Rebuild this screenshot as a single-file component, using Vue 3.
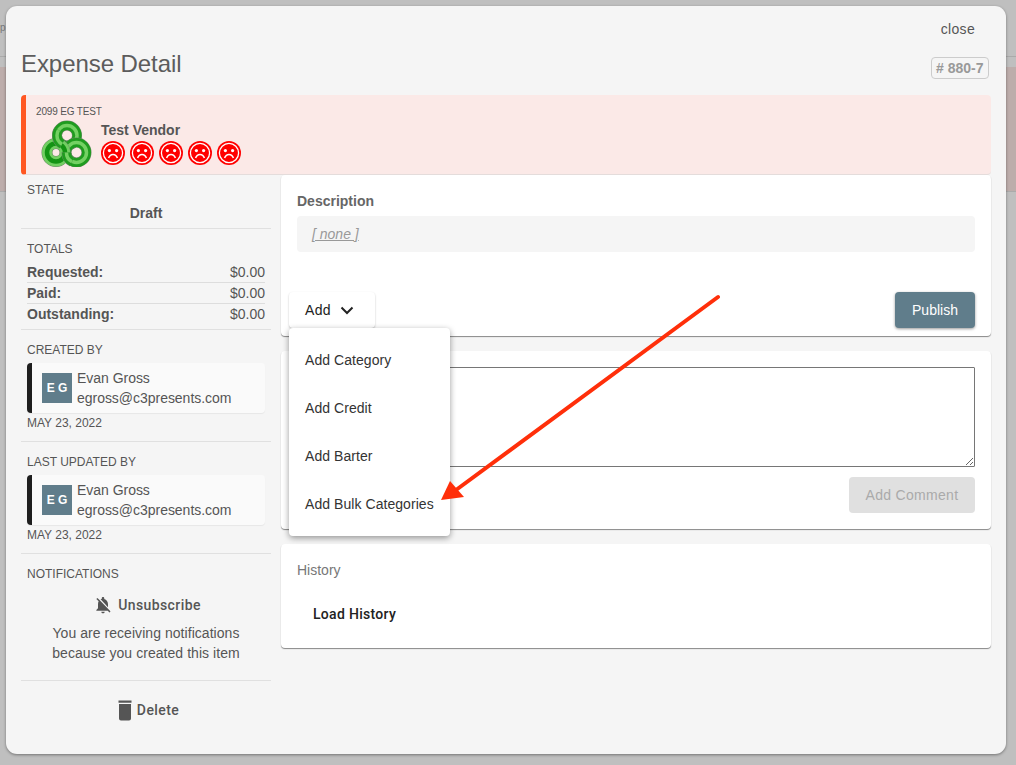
<script setup>
const totals = [
  { label: 'Requested:', value: '$0.00' },
  { label: 'Paid:', value: '$0.00' },
  { label: 'Outstanding:', value: '$0.00' }
]
const menu = ['Add Category', 'Add Credit', 'Add Barter', 'Add Bulk Categories']
const people = [
  { heading: 'CREATED BY' },
  { heading: 'LAST UPDATED BY' }
]
const bands = [
  { color: '#6b8a66', width: 10 },
  { color: '#1f9c1f', width: 9 },
  { color: '#74d163', width: 3.5 }
]
const leftBands = [
  { color: '#6b8a66', width: 11 },
  { color: '#72cf62', width: 10 },
  { color: '#149414', width: 4.5 }
]
</script>

<template>
  <div class="screen">
    <div class="backdrop-text">p,</div>
    <div class="backdrop-line"></div>
    <div class="backdrop-band"></div>
    <div class="modal">
      <div class="close-row"><span class="close">close</span></div>
      <div class="title-row">
        <h1>Expense Detail</h1>
        <span class="tag"># 880-7</span>
      </div>
      <div class="banner">
        <div class="event">2099 EG TEST</div>
        <div class="vendor-row">
          <svg class="logo" width="52" height="50" viewBox="0 0 52 50" fill="none">
            <circle v-for="b in bands" :key="'t' + b.width" cx="26" cy="18.5" r="10" :stroke="b.color" :stroke-width="b.width" />
            <circle v-for="b in bands" :key="'r' + b.width" cx="35.5" cy="35.5" r="10" :stroke="b.color" :stroke-width="b.width" />
            <circle v-for="b in leftBands" :key="'l' + b.width" cx="15" cy="35.5" r="9" :stroke="b.color" :stroke-width="b.width" />
            <path v-for="b in bands" :key="'a' + b.width" d="M17.5 13.2A10 10 0 0 0 16 18.5 10 10 0 0 0 21 27.2" :stroke="b.color" :stroke-width="b.width" />
            <path v-for="b in bands" :key="'c' + b.width" d="M25.5 35.5A10 10 0 0 0 31 44.7" :stroke="b.color" :stroke-width="b.width" />
          </svg>
          <div class="vendor">
            <div class="vendor-name">Test Vendor</div>
            <div class="faces">
              <svg v-for="n in 5" :key="n" width="24" height="24" viewBox="0 0 24 24">
                <circle cx="12" cy="12" r="12" fill="#f00" />
                <circle cx="12" cy="12" r="9.6" fill="#f00" stroke="#fff" stroke-width="1.3" />
                <circle cx="8.4" cy="9.6" r="1.6" fill="#fff" />
                <circle cx="15.6" cy="9.6" r="1.6" fill="#fff" />
                <path d="M7.6 17c1-2.6 2.6-3.6 4.4-3.6s3.4 1 4.4 3.6" fill="none" stroke="#fff" stroke-width="1.5" />
              </svg>
            </div>
          </div>
        </div>
      </div>
      <div class="columns">
        <aside class="side">
          <section class="block state">
            <div class="label">STATE</div>
            <div class="state-value">Draft</div>
          </section>
          <section class="block totals">
            <div class="label">TOTALS</div>
            <div v-for="t in totals" :key="t.label" class="total-row">
              <b>{{ t.label }}</b><span>{{ t.value }}</span>
            </div>
          </section>
          <section v-for="p in people" :key="p.heading" class="block person-block">
            <div class="label">{{ p.heading }}</div>
            <div class="person">
              <div class="avatar">E G</div>
              <div class="person-text">
                <div>Evan Gross</div>
                <div>egross@c3presents.com</div>
              </div>
            </div>
            <div class="date">MAY 23, 2022</div>
          </section>
          <section class="block notify">
            <div class="label">NOTIFICATIONS</div>
            <div class="action unsub">
              <svg width="20" height="20" viewBox="0 0 24 24" fill="#555">
                <path d="M20 18.69L7.84 6.14 5.27 3.49 4 4.76l2.8 2.8v.01C6.29 8.54 6 9.72 6 11v5l-2 2v1h13.73l2 2L21 19.72l-1-1.03zM12 22c1.11 0 2-.89 2-2h-4c0 1.11.89 2 2 2zm6-7.32V11c0-3.08-1.64-5.64-4.5-6.32V4c0-.83-.67-1.5-1.5-1.5s-1.5.67-1.5 1.5v.68c-.15.03-.29.08-.42.12-.1.03-.2.07-.3.11h-.01c-.2.08-.4.17-.59.27-.01 0-.01 0-.02.01L18 14.68z" />
              </svg>
              <span>Unsubscribe</span>
            </div>
            <p>You are receiving notifications<br />because you created this item</p>
          </section>
          <div class="action delete">
            <svg width="20" height="22" viewBox="0 0 20 22" fill="#555">
              <path d="M3.5 1.5h13v2.2h-13zM4 5h12v14.5a2 2 0 0 1-2 2H6a2 2 0 0 1-2-2z" />
            </svg>
            <span>Delete</span>
          </div>
        </aside>
        <main class="main">
          <section class="card desc-card">
            <div class="desc-title">Description</div>
            <div class="desc-box"><span>[ none ]</span></div>
            <div class="desc-actions">
              <div class="add-wrap">
                <button class="add-btn">
                  Add
                  <svg width="14" height="9" viewBox="0 0 14 9" fill="none" stroke="#222" stroke-width="2"><path d="M1.5 1.5L7 7l5.5-5.5" /></svg>
                </button>
                <div class="menu">
                  <div v-for="m in menu" :key="m" class="menu-item">{{ m }}</div>
                </div>
              </div>
              <button class="publish">Publish</button>
            </div>
          </section>
          <section class="card comment-card">
            <textarea class="comment"></textarea>
            <div class="comment-actions"><button class="add-comment">Add Comment</button></div>
          </section>
          <section class="card history-card">
            <div class="history-title">History</div>
            <div class="load">Load History</div>
          </section>
        </main>
      </div>
    </div>
    <svg class="arrow" width="1016" height="765" viewBox="0 0 1016 765">
      <path d="M718 297L456 490" stroke="#ff2f0a" stroke-width="4" stroke-linecap="round" fill="none" />
      <path d="M441 500L450 481 464 497z" fill="#ff2f0a" />
    </svg>
  </div>
</template>

<style>
html, body { margin: 0; padding: 0; }
</style>

<style scoped>
.screen {
  position: relative;
  width: 1016px;
  height: 765px;
  overflow: hidden;
  background: #bfbfbf;
  font-family: "Liberation Sans", Arial, sans-serif;
  color: #555;
}
.backdrop-text {
  position: absolute;
  left: 0;
  top: 22px;
  font-size: 10px;
  color: #777;
}
.backdrop-line {
  position: absolute;
  left: 0;
  right: 0;
  top: 56px;
  height: 1px;
  background: #aaa;
}
.backdrop-band {
  position: absolute;
  left: 0;
  right: 0;
  top: 67px;
  height: 124px;
  background: #bdadab;
  border-bottom: 1px solid #aaa;
}
.modal {
  position: absolute;
  left: 6px;
  top: 6px;
  width: 1000px;
  height: 748px;
  box-sizing: border-box;
  padding: 0 15px;
  background: #f5f5f5;
  border-radius: 11px;
  box-shadow: 0 1px 3px rgba(0, 0, 0, 0.4);
}
.close-row {
  display: flex;
  justify-content: flex-end;
  height: 46px;
  padding: 15px 16px 0 0;
  box-sizing: border-box;
}
.close { font-size: 14px; line-height: 16px; letter-spacing: 0.3px; }
.title-row {
  display: flex;
  justify-content: space-between;
  align-items: flex-start;
  height: 43px;
}
h1 {
  margin: 0;
  font-size: 24px;
  font-weight: 400;
  line-height: 24px;
  letter-spacing: -0.07px;
  color: #5c5c5c;
}
.tag {
  margin: 5px 2px 0 0;
  padding: 0 4.5px;
  height: 20px;
  line-height: 20px;
  border: 1px solid #ccc;
  border-radius: 4px;
  font-size: 14px;
  font-weight: 700;
  color: #999;
}
.banner {
  height: 80px;
  box-sizing: border-box;
  padding: 11px 0 0 10px;
  background: #fbe9e7;
  border-left: 5px solid #ff5722;
  border-radius: 4px;
  border-bottom: 1px solid #e4dcdb;
}
.event { font-size: 10px; line-height: 12px; letter-spacing: -0.17px; }
.vendor-row { display: flex; margin-top: -1px; }
.logo { margin: 0 8px 0 5px; width: 52px; height: 50px; flex: none; }
.vendor { padding-top: 5px; }
.vendor-name { font-size: 14px; font-weight: 700; line-height: 16px; }
.faces { display: flex; gap: 5px; margin-top: 3px; }
.columns { display: flex; gap: 10px; }
.side { width: 250px; flex: none; }
.block { border-bottom: 1px solid #e0e0e0; padding: 0 6px; }
.label { font-size: 12px; line-height: 14px; padding-top: 8px; }
.state { height: 54px; box-sizing: border-box; }
.state-value {
  margin-top: 8px;
  text-align: center;
  font-size: 14px;
  font-weight: 700;
  line-height: 16px;
}
.totals { height: 101px; box-sizing: border-box; padding-top: 5px; }
.total-row {
  display: flex;
  justify-content: space-between;
  font-size: 14px;
  line-height: 20px;
  height: 21px;
  box-sizing: border-box;
  border-bottom: 1px solid #ddd;
}
.totals .label { margin-bottom: 6px; }
.total-row:last-child { border-bottom: 0; }
.person-block { height: 112px; box-sizing: border-box; }
.person-block .label { padding-top: 13px; margin-bottom: 6px; }
.person {
  display: flex;
  align-items: center;
  height: 50px;
  box-sizing: border-box;
  background: #fafafa;
  border-left: 5px solid #1e1e1e;
  border-radius: 4px;
  box-shadow: 0 1px 1px rgba(0, 0, 0, 0.06);
  padding-left: 10px;
}
.avatar {
  width: 30px;
  height: 30px;
  flex: none;
  background: #607d8b;
  color: #fff;
  font-size: 12px;
  font-weight: 700;
  text-align: center;
  line-height: 30px;
  margin-right: 5px;
}
.person-text { font-size: 14px; line-height: 20px; letter-spacing: -0.03px; }
.date { font-size: 12px; line-height: 14px; margin-top: 3px; }
.notify { height: 127px; box-sizing: border-box; text-align: center; }
.notify .label { text-align: left; padding-top: 13px; }
.action {
  display: flex;
  align-items: center;
  justify-content: center;
  padding-left: 2px;
  font-family: Roboto, "Liberation Sans", sans-serif;
  font-size: 14px;
  font-weight: 500;
  letter-spacing: 0.4px;
  gap: 5px;
}
.unsub { margin-top: 14px; height: 20px; }
.notify p { margin: 8px 0 0; font-size: 14px; line-height: 20px; letter-spacing: 0.05px; }
.delete { margin-top: 18px; height: 22px; gap: 2px; }
.main { flex: 1; min-width: 0; display: flex; flex-direction: column; gap: 15px; }
.card {
  background: #fff;
  border-radius: 4px;
  box-shadow: 0 1px 1px rgba(0, 0, 0, 0.45);
  box-sizing: border-box;
}
.desc-card { height: 161px; padding: 18px 16px 0; }
.desc-title { font-size: 14px; font-weight: 700; line-height: 16px; color: #666; }
.desc-box {
  margin-top: 7px;
  height: 36px;
  box-sizing: border-box;
  padding: 9px 15px;
  background: #f5f5f5;
  border-radius: 4px;
  font-size: 14px;
  line-height: 18px;
  color: #999;
  font-style: italic;
}
.desc-box span { text-decoration: underline; }
.desc-actions {
  display: flex;
  justify-content: space-between;
  margin: 40px 0 0 -8px;
}
.add-wrap { position: relative; }
.add-btn {
  display: flex;
  align-items: center;
  gap: 9px;
  width: 86px;
  height: 36px;
  padding: 0 0 0 16px;
  border: 0;
  border-radius: 4px;
  background: #fff;
  box-shadow: 0 1px 2px rgba(0, 0, 0, 0.25);
  font: 14px "Liberation Sans", Arial, sans-serif;
  letter-spacing: 0.35px;
  color: #222;
}
.menu {
  position: absolute;
  left: 0;
  top: 36px;
  z-index: 2;
  width: 161px;
  height: 208px;
  box-sizing: border-box;
  padding: 8px 0;
  background: #fff;
  border-radius: 4px;
  box-shadow: 0 2px 6px rgba(0, 0, 0, 0.4);
}
.menu-item {
  height: 48px;
  line-height: 48px;
  padding-left: 16px;
  font-size: 14px;
  letter-spacing: 0.06px;
  color: #333;
  white-space: nowrap;
}
.publish {
  width: 80px;
  height: 36px;
  border: 0;
  border-radius: 4px;
  background: #607d8b;
  box-shadow: 0 1px 3px rgba(0, 0, 0, 0.4);
  color: #fff;
  font: 14px "Liberation Sans", Arial, sans-serif;
}
.comment-card { height: 178px; padding: 16px 16px 0; }
.comment {
  display: block;
  width: 100%;
  height: 100px;
  box-sizing: border-box;
  border: 1px solid #767676;
  border-radius: 1px;
  background: #fff;
  outline: 0;
}
.comment-actions { display: flex; justify-content: flex-end; margin-top: 10px; }
.add-comment {
  width: 126px;
  height: 36px;
  border: 0;
  border-radius: 4px;
  background: #e0e0e0;
  color: #aaa;
  font: 14px "Liberation Sans", Arial, sans-serif;
  letter-spacing: 0.3px;
}
.history-card { height: 104px; padding: 18px 16px 0; }
.history-title { font-size: 14px; line-height: 16px; color: #777; }
.load {
  margin: 26px 0 0 16px;
  font-family: Roboto, "Liberation Sans", sans-serif;
  font-size: 14px;
  font-weight: 500;
  line-height: 20px;
  letter-spacing: 0.3px;
  color: #222;
}
.arrow { position: absolute; left: 0; top: 0; pointer-events: none; z-index: 5; }
</style>
